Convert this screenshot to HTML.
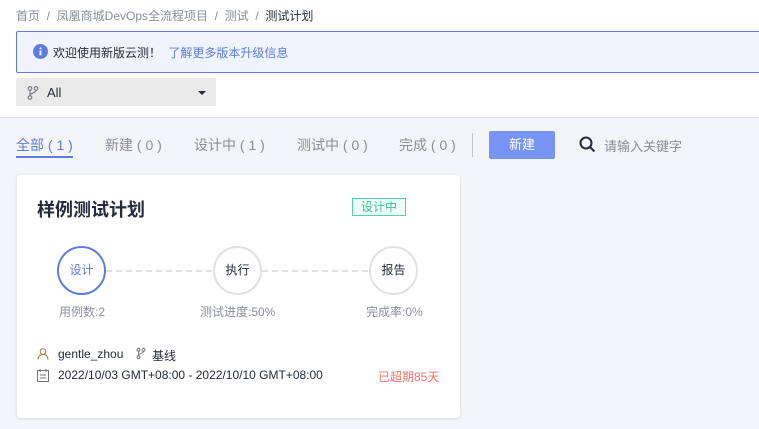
<!DOCTYPE html>
<html><head><meta charset="utf-8"><style>
*{margin:0;padding:0;box-sizing:border-box}
body{width:759px;height:429px;overflow:hidden;background:#f3f5f8;font-family:"Liberation Sans","Noto Sans CJK SC",sans-serif;font-size:12px;color:#252b3a;position:relative}
.top{position:absolute;left:0;top:0;width:759px;height:118px;background:#fff;border-bottom:1px solid #dfe1e6}
.abs{position:absolute;white-space:nowrap}
.bc{left:16px;top:7px;color:#8a8e99}
.bc b{font-weight:normal;color:#252b3a}
.banner{left:16px;top:31px;width:760px;height:42px;background:#f0f4fd;border:1px solid #5e7ce0;border-radius:2px}
.dd{left:16px;top:78px;width:200px;height:28px;background:#eaeaea;border-radius:2px}
.tab{top:135px;font-size:14px;color:#8a8e99}
.card{left:17px;top:175px;width:443px;height:243px;background:#fff;border-radius:4px;box-shadow:0 1px 3px rgba(0,0,0,.12)}
.c{position:absolute;width:49px;height:49px;border-radius:50%;border:2px solid #dfe1e6;background:#fff;text-align:center;line-height:45px;font-size:12px;color:#252b3a}
.lbl{color:#8a8e99;font-size:12px}
.dash{height:2px;background:repeating-linear-gradient(90deg,#dfe1e6 0 6px,transparent 6px 10px)}
</style></head><body>
<div class="top"></div>
<div class="abs bc">首页 &nbsp;/&nbsp; 凤凰商城DevOps全流程项目 &nbsp;/&nbsp; 测试 &nbsp;/&nbsp; <b>测试计划</b></div>
<div class="abs banner"></div>
<svg class="abs" style="left:33px;top:44px" width="15" height="15" viewBox="0 0 16 16"><circle cx="8" cy="8" r="8" fill="#5e7ce0"/><rect x="7" y="7" width="2" height="5" fill="#fff"/><circle cx="8" cy="4.6" r="1.1" fill="#fff"/></svg>
<div class="abs" style="left:53px;top:44px">欢迎使用新版云测！ <span style="color:#5e7ce0;margin-left:4px">了解更多版本升级信息</span></div>
<div class="abs dd"></div>
<svg class="abs" style="left:27px;top:86px" width="12" height="14" viewBox="0 0 12 14" fill="none" stroke="#71757f" stroke-width="1.1"><circle cx="3" cy="2.5" r="1.8"/><circle cx="9" cy="2.5" r="1.8"/><circle cx="3" cy="11.5" r="1.8"/><path d="M3 4.3v5.4M9 4.3c0 3-6 2.5-6 5"/></svg>
<div class="abs" style="left:47px;top:85px;font-size:13px">All</div>
<div class="abs" style="left:198px;top:91px;width:0;height:0;border-left:4px solid transparent;border-right:4px solid transparent;border-top:4px solid #252b3a"></div>
<div class="abs tab" style="left:16px;color:#5e7ce0">全部 ( 1 )</div>
<div class="abs" style="left:16px;top:156px;width:57px;height:2px;background:#5e7ce0"></div>
<div class="abs tab" style="left:105px">新建 ( 0 )</div>
<div class="abs tab" style="left:194px">设计中 ( 1 )</div>
<div class="abs tab" style="left:297px">测试中 ( 0 )</div>
<div class="abs tab" style="left:399px">完成 ( 0 )</div>
<div class="abs" style="left:472px;top:133px;width:1px;height:24px;background:#c2c4c9"></div>
<div class="abs" style="left:489px;top:131px;width:66px;height:28px;background:#7693f5;border-radius:2px;color:#fff;text-align:center;line-height:28px;font-size:13px">新建</div>
<svg class="abs" style="left:579px;top:136px" width="17" height="17" viewBox="0 0 17 17" fill="none" stroke="#252b3a" stroke-width="2"><circle cx="7" cy="7" r="5.5"/><path d="M11 11l4.5 4.5"/></svg>
<div class="abs" style="left:604px;top:136px;color:#8a8e99;font-size:13px">请输入关键字</div>
<div class="abs card"></div>
<div class="abs" style="left:37px;top:196px;font-size:18px;font-weight:bold">样例测试计划</div>
<div class="abs" style="left:352px;top:198px;width:54px;height:18px;border:1px solid #50d4ab;background:#edfff9;color:#3ac295;text-align:center;line-height:16px;font-size:12px">设计中</div>
<div class="abs dash" style="left:106px;top:270px;width:108px"></div>
<div class="abs dash" style="left:262px;top:270px;width:108px"></div>
<div class="c" style="left:57px;top:246px;border-color:#5e7ce0;color:#5e7ce0">设计</div>
<div class="c" style="left:213px;top:246px">执行</div>
<div class="c" style="left:369px;top:246px">报告</div>
<div class="abs lbl" style="left:59px;top:303px">用例数:2</div>
<div class="abs lbl" style="left:200px;top:303px">测试进度:50%</div>
<div class="abs lbl" style="left:366px;top:303px">完成率:0%</div>
<svg class="abs" style="left:37px;top:348px" width="12" height="12" viewBox="0 0 12 12" fill="none" stroke="#a8753f" stroke-width="1"><circle cx="6" cy="3.5" r="2.8"/><path d="M1 11.5c0-3 2-5 5-5s5 2 5 5"/></svg>
<div class="abs" style="left:58px;top:347px">gentle_zhou</div>
<svg class="abs" style="left:136px;top:347px" width="10" height="13" viewBox="0 0 12 14" fill="none" stroke="#71757f" stroke-width="1.1"><circle cx="3" cy="2.5" r="1.8"/><circle cx="9" cy="2.5" r="1.8"/><circle cx="3" cy="11.5" r="1.8"/><path d="M3 4.3v5.4M9 4.3c0 3-6 2.5-6 5"/></svg>
<div class="abs" style="left:152px;top:347px">基线</div>
<svg class="abs" style="left:37px;top:369px" width="12" height="13" viewBox="0 0 12 13" fill="none" stroke="#71757f" stroke-width="1"><rect x="0.5" y="1.5" width="11" height="11"/><path d="M3 0v3M9 0v3M3 6h6M3 9h6"/></svg>
<div class="abs" style="left:58px;top:368px">2022/10/03 GMT+08:00 - 2022/10/10 GMT+08:00</div>
<div class="abs" style="left:378px;top:368px;color:#f66f6a">已超期85天</div>
</body></html>
